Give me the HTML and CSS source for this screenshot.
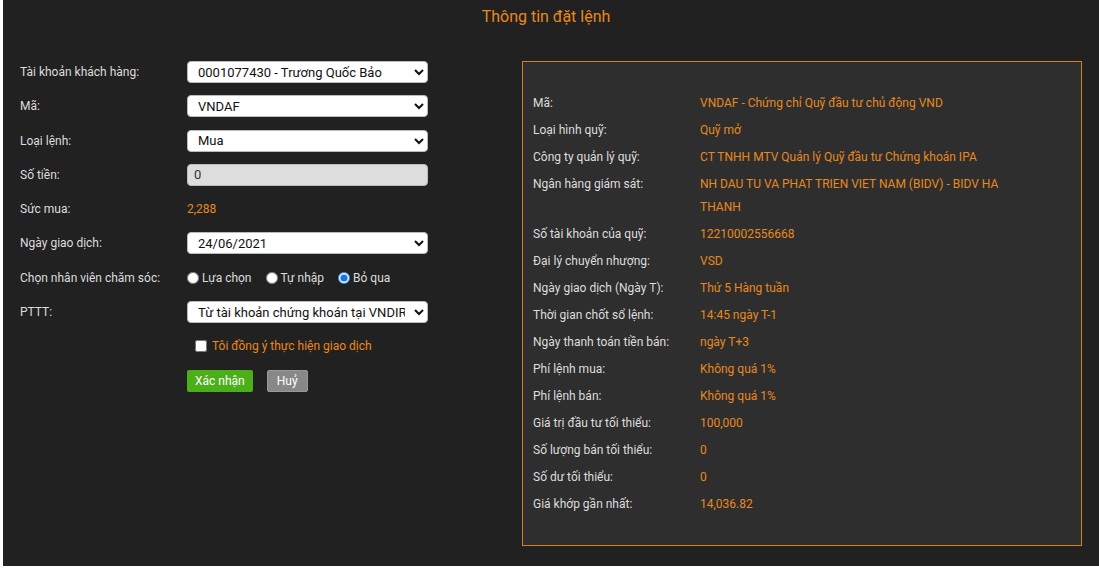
FILE: index.html
```html
<!DOCTYPE html>
<html lang="vi">
<head>
    <meta charset="UTF-8">
    <meta name="viewport" content="width=device-width, initial-scale=1.0">
    <title>Thông tin đặt lệnh</title>
    <link rel="stylesheet" href="styles.css">
</head>
<body>

<div class="page">
    <h1 class="title">Thông tin đặt lệnh</h1>

    <div class="content">
        <!-- Form đặt lệnh -->
        <form class="order-form">
            <div class="form-row">
                <label class="form-label">Tài khoản khách hàng:</label>
                <select class="field">
                    <option>0001077430 - Trương Quốc Bảo</option>
                </select>
            </div>
            <div class="form-row">
                <label class="form-label">Mã:</label>
                <select class="field">
                    <option>VNDAF</option>
                </select>
            </div>
            <div class="form-row">
                <label class="form-label">Loại lệnh:</label>
                <select class="field">
                    <option>Mua</option>
                    <option>Bán</option>
                </select>
            </div>
            <div class="form-row">
                <label class="form-label">Số tiền:</label>
                <input class="field readonly" type="text" value="0" readonly>
            </div>
            <div class="form-row">
                <label class="form-label">Sức mua:</label>
                <span class="value">2,288</span>
            </div>
            <div class="form-row">
                <label class="form-label">Ngày giao dịch:</label>
                <select class="field">
                    <option>24/06/2021</option>
                </select>
            </div>
            <div class="form-row">
                <label class="form-label">Chọn nhân viên chăm sóc:</label>
                <div class="radios">
                    <label class="radio"><input type="radio" name="nv"> Lựa chọn</label>
                    <label class="radio"><input type="radio" name="nv"> Tự nhập</label>
                    <label class="radio"><input type="radio" name="nv" checked> Bỏ qua</label>
                </div>
            </div>
            <div class="form-row">
                <label class="form-label">PTTT:</label>
                <select class="field">
                    <option>Từ tài khoản chứng khoán tại VNDIRECT</option>
                </select>
            </div>
            <div class="form-row agree-row">
                <label class="agree"><input type="checkbox"> Tôi đồng ý thực hiện giao dịch</label>
            </div>
            <div class="form-row button-row">
                <button type="button" class="btn btn-confirm">Xác nhận</button>
                <button type="button" class="btn btn-cancel">Huỷ</button>
            </div>
        </form>

        <!-- Thông tin quỹ -->
        <div class="fund-info">
            <div class="info-row"><span class="info-label">Mã:</span><span class="info-value">VNDAF - Chứng chỉ Quỹ đầu tư chủ động VND</span></div>
            <div class="info-row"><span class="info-label">Loại hình quỹ:</span><span class="info-value">Quỹ mở</span></div>
            <div class="info-row"><span class="info-label">Công ty quản lý quỹ:</span><span class="info-value">CT TNHH MTV Quản lý Quỹ đầu tư Chứng khoán IPA</span></div>
            <div class="info-row"><span class="info-label">Ngân hàng giám sát:</span><span class="info-value">NH DAU TU VA PHAT TRIEN VIET NAM (BIDV) - BIDV HA THANH</span></div>
            <div class="info-row"><span class="info-label">Số tài khoản của quỹ:</span><span class="info-value">12210002556668</span></div>
            <div class="info-row"><span class="info-label">Đại lý chuyển nhượng:</span><span class="info-value">VSD</span></div>
            <div class="info-row"><span class="info-label">Ngày giao dịch (Ngày T):</span><span class="info-value">Thứ 5 Hàng tuần</span></div>
            <div class="info-row"><span class="info-label">Thời gian chốt sổ lệnh:</span><span class="info-value">14:45 ngày T-1</span></div>
            <div class="info-row"><span class="info-label">Ngày thanh toán tiền bán:</span><span class="info-value">ngày T+3</span></div>
            <div class="info-row"><span class="info-label">Phí lệnh mua:</span><span class="info-value">Không quá 1%</span></div>
            <div class="info-row"><span class="info-label">Phí lệnh bán:</span><span class="info-value">Không quá 1%</span></div>
            <div class="info-row"><span class="info-label">Giá trị đầu tư tối thiểu:</span><span class="info-value">100,000</span></div>
            <div class="info-row"><span class="info-label">Số lượng bán tối thiểu:</span><span class="info-value">0</span></div>
            <div class="info-row"><span class="info-label">Số dư tối thiểu:</span><span class="info-value">0</span></div>
            <div class="info-row"><span class="info-label">Giá khớp gần nhất:</span><span class="info-value">14,036.82</span></div>
        </div>
    </div>
</div>

</body>
</html>
```

FILE: styles.css
```css
/* Genel */
body {
    margin: 0;
    background-color: #fff;
    font-family: Roboto, 'Liberation Sans', Arial, sans-serif;
    font-size: 12px;
    color: #ddd;
}

.page {
    margin-left: 3px;
    height: 566px;
    background-color: #212121;
}

.title {
    margin: 0;
    padding: 7px 10px 0 0;
    height: 24px;
    text-align: center;
    font-size: 16px;
    font-weight: normal;
    color: #e8891e;
}

.content {
    display: flex;
    align-items: flex-start;
    padding-top: 30px;
}

/* Form */
.order-form {
    width: 425px;
    padding-left: 17px;
}

.form-row {
    display: flex;
    align-items: center;
    height: 22px;
    margin-bottom: 12.3px;
}

.form-label {
    width: 167px;
    flex-shrink: 0;
}

.field {
    box-sizing: border-box;
    width: 241px;
    height: 22px;
    padding: 0 6px;
    border: 1px solid #bbb;
    border-radius: 4px;
    background-color: #fff;
    font-family: inherit;
    font-size: 13px;
    color: #111;
}

.field.readonly {
    background-color: #ddd;
    color: #333;
    outline: none;
}

.value {
    color: #e8891e;
}

.radios {
    display: flex;
    gap: 14px;
}

.radio {
    display: flex;
    align-items: center;
    gap: 3px;
    color: #ddd;
}

.radio input {
    margin: 0;
    width: 12px;
    height: 12px;
    accent-color: #1a73e8;
}

.agree-row {
    padding-left: 175px;
    margin-bottom: 13px;
}

.agree {
    display: flex;
    align-items: center;
    gap: 5px;
    white-space: nowrap;
    color: #e8891e;
}

.agree input {
    margin: 0;
    width: 12px;
    height: 12px;
}

.button-row {
    padding-left: 167px;
    gap: 14px;
}

.btn {
    height: 22px;
    padding: 0 8px;
    border: none;
    border-radius: 2px;
    font-family: inherit;
    font-size: 12px;
    color: #fff;
    cursor: pointer;
}

.btn-confirm {
    background-color: #4caf1a;
}

.btn-cancel {
    padding: 0 9px;
    background-color: #888;
    border: 1px solid #999;
}

/* Fon bilgileri */
.fund-info {
    box-sizing: border-box;
    width: 560px;
    height: 485px;
    margin-left: 77px;
    padding: 28px 10px 0;
    border: 1px solid #d4821e;
    background-color: #2e2e2e;
}

.info-row {
    display: flex;
    line-height: 23px;
    padding: 2px 0;
}

.info-label {
    width: 167px;
    flex-shrink: 0;
}

.info-value {
    width: 310px;
    color: #e8891e;
}
```
